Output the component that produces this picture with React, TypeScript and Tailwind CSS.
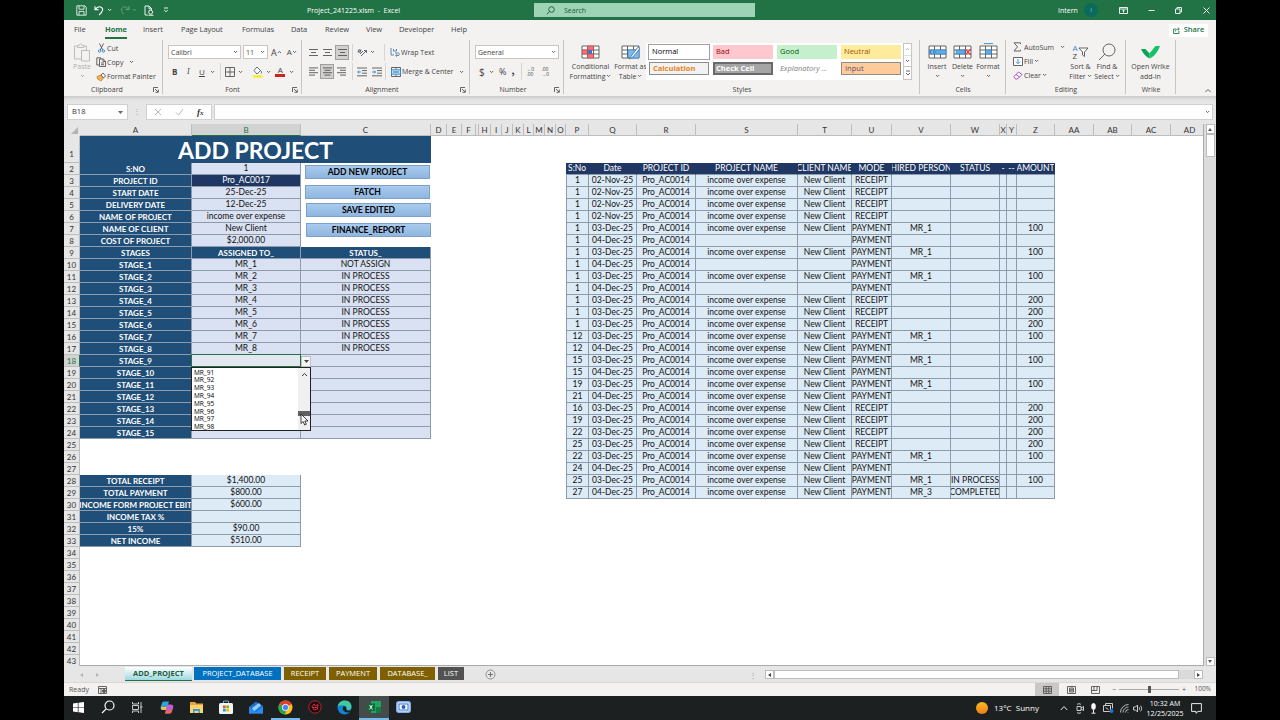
import React from "react"
import clsx from "clsx"

type WithChildren = { children?: React.ReactNode; className?: string }

const SHEET_COLS = "grid grid-cols-[112px_109px_130px_16px_15px_14px_3px_12px_11px_11px_11px_10px_11px_11px_10px_23px_48px_59px_102px_54px_40px_59px_49px_7px_10px_38px_39px_38px_39px_38px]"
const FORM_COLS = "grid grid-cols-[112px_109px_130px]"
const LEDGER_COLS = "grid grid-cols-[23px_48px_59px_102px_54px_40px_59px_49px_7px_10px_38px]"

const columnNames = ["A", "B", "C", "D", "E", "F", "", "H", "I", "J", "K", "L", "M", "N", "O", "P", "Q", "R", "S", "T", "U", "V", "W", "X", "Y", "Z", "AA", "AB", "AC", "AD"]

const projectRows = [
	["S:NO", "1"],
	["PROJECT ID", "Pro_AC0017"],
	["START DATE", "25-Dec-25"],
	["DELIVERY DATE", "12-Dec-25"],
	["NAME OF PROJECT", "income over expense"],
	["NAME OF CLIENT", "New Client"],
	["COST OF PROJECT", "$2,000.00"],
]

const stageRows = Array.from({ length: 15 }, (_, i) => [
	`STAGE_${i + 1}`,
	i < 8 ? `MR_${i + 1}` : "",
	i === 0 ? "NOT ASSIGN" : i < 8 ? "IN PROCESS" : "",
])

const totalRows = [
	["TOTAL RECEIPT", "$1,400.00"],
	["TOTAL PAYMENT", "$800.00"],
	["INCOME FORM PROJECT EBIT", "$600.00"],
	["INCOME TAX %", ""],
	["15%", "$90.00"],
	["NET INCOME", "$510.00"],
]

const ledgerHead = ["S:No", "Date", "PROJECT ID", "PROJECT NAME", "CLIENT NAME", "MODE", "HIRED PERSON", "STATUS", "-", "--", "AMOUNT"]

// serial, date, named project?, mode, person, status, amount
const ledger: [number, string, boolean, string, string, string, string][] = [
	[1, "02-Nov-25", true, "RECEIPT", "", "", ""],
	[1, "02-Nov-25", true, "RECEIPT", "", "", ""],
	[1, "02-Nov-25", true, "RECEIPT", "", "", ""],
	[1, "02-Nov-25", true, "RECEIPT", "", "", ""],
	[1, "03-Dec-25", true, "PAYMENT", "MR_1", "", "100"],
	[1, "04-Dec-25", false, "PAYMENT", "", "", ""],
	[1, "03-Dec-25", true, "PAYMENT", "MR_1", "", "100"],
	[1, "04-Dec-25", false, "PAYMENT", "", "", ""],
	[1, "03-Dec-25", true, "PAYMENT", "MR_1", "", "100"],
	[1, "04-Dec-25", false, "PAYMENT", "", "", ""],
	[1, "03-Dec-25", true, "RECEIPT", "", "", "200"],
	[1, "03-Dec-25", true, "RECEIPT", "", "", "200"],
	[1, "03-Dec-25", true, "RECEIPT", "", "", "200"],
	[12, "03-Dec-25", true, "PAYMENT", "MR_1", "", "100"],
	[12, "04-Dec-25", true, "PAYMENT", "", "", ""],
	[15, "03-Dec-25", true, "PAYMENT", "MR_1", "", "100"],
	[15, "04-Dec-25", true, "PAYMENT", "", "", ""],
	[19, "03-Dec-25", true, "PAYMENT", "MR_1", "", "100"],
	[21, "04-Dec-25", true, "PAYMENT", "", "", ""],
	[16, "03-Dec-25", true, "RECEIPT", "", "", "200"],
	[19, "03-Dec-25", true, "RECEIPT", "", "", "200"],
	[22, "03-Dec-25", true, "RECEIPT", "", "", "200"],
	[25, "03-Dec-25", true, "RECEIPT", "", "", "200"],
	[22, "03-Dec-25", true, "PAYMENT", "MR_1", "", "100"],
	[24, "04-Dec-25", true, "PAYMENT", "", "", ""],
	[25, "03-Dec-25", true, "PAYMENT", "MR_1", "IN PROCESS", "100"],
	[27, "04-Dec-25", true, "PAYMENT", "MR_3", "COMPLETED", ""],
]

function Svg({ w, h, children, className }: WithChildren & { w: number; h: number }) {
	return (
		<svg width={w} height={h} viewBox={`0 0 ${w} ${h}`} fill="none" stroke="#555" strokeWidth="0.9" className={clsx("shrink-0", className)}>
			{children}
		</svg>
	)
}

function Caret({ className }: { className?: string }) {
	return (
		<Svg w={5} h={4} className={className}>
			<path d="M1 1l1.6 1.6L4.2 1" />
		</Svg>
	)
}

function Launcher() {
	return (
		<Svg w={6} h={6}>
			<path d="M.5 5V.5H5M2 2l3 3M5.3 2.5v2.8H2.5" />
		</Svg>
	)
}

function Lines({ rows }: { rows: [number, number][] }) {
	return (
		<Svg w={9} h={9}>
			{rows.map(([from, to], i) => (
				<path key={i} d={`M${from} ${rows.length === 3 ? i * 3 + 1.5 : i * 2.4 + 0.9}H${to}`} />
			))}
		</Svg>
	)
}

function Group({ label, launcher, children, className }: WithChildren & { label: string; launcher?: boolean }) {
	return (
		<div className={clsx("relative flex h-[55px] shrink-0 flex-col", className)}>
			<div className="flex h-[45px]">{children}</div>
			<div className="flex h-3 items-center justify-center text-[7px]">{label}</div>
			{launcher && <div className="absolute right-1 bottom-0.5"><Launcher /></div>}
			<div className="absolute top-0 right-0 h-[54px] w-px bg-[#c8c6c4]" />
		</div>
	)
}

function BigButton({ icon, lines, caret, className }: { icon: React.ReactNode; lines: string[]; caret?: boolean; className?: string }) {
	return (
		<div className={clsx("flex shrink-0 flex-col items-center pt-0.5 text-[7px] whitespace-nowrap", className)}>
			<div className="flex h-[20px] items-center">{icon}</div>
			{lines.map((line, i) => (
				<div key={line} className="flex h-[9.5px] items-center gap-px">
					{line}
					{caret && i === 1 && <Caret />}
				</div>
			))}
			{caret && lines.length === 1 && <Caret className="mt-0.5" />}
		</div>
	)
}

function TitleBar() {
	return (
		<header className="flex h-5 items-center bg-[#217346] text-[7px] text-white">
			<div className="flex w-[243px] items-center pl-3">
				<Svg w={11} h={11} className="stroke-white"><path d="M.8.8h8l1.4 1.4v8H.8zM3 .8v3.4h5V.8M3 10V6.4h5V10" stroke="#e8f2ec" /></Svg>
				<Svg w={11} h={11} className="ml-[7px]"><path d="M1 1.2v3.6h3.6M1.2 4.6C3 2 5 1.4 6.6 2c3.2 1.4 2.600 4.500-1.600 8" stroke="#fff" strokeWidth="1.1" /></Svg>
				<Svg w={5} h={4} className="ml-0.5"><path d="M1 1l1.600 1.600L4.200 1" stroke="#fff" /></Svg>
				<Svg w={10} h={10} className="ml-2 opacity-35"><path d="M9 1v3.500H5.500M8.800 4.400C7 2 5 1.400 3.500 2 .500 3.500 1.200 6 3.500 9" stroke="#fff" /></Svg>
				<Svg w={5} h={4} className="ml-0.5 opacity-35"><path d="M1 1l1.600 1.600L4.200 1" stroke="#fff" /></Svg>
				<Svg w={10} h={11} className="ml-[7px]"><path d="M4 10H1V1h4l2.500 2.500V5M5 1v2.800h2.500" stroke="#fff" /><circle cx="6.600" cy="7.200" r="2" stroke="#fff" /><path d="M4.500 10.300h5" stroke="#fff" /></Svg>
				<Svg w={6} h={6} className="ml-[9px]"><path d="M1 1h4M1.200 3l1.800 1.800L4.800 3" stroke="#fff" /></Svg>
			</div>
			<div className="w-[227px] text-[7px] whitespace-pre">Project_241225.xlsm  -  Excel</div>
			<div className="flex h-[14px] w-[221px] items-center bg-[#9fd3b6] pl-3 text-[#1c5a38]">
				<Svg w={9} h={9}><circle cx="5.500" cy="3.500" r="2.800" stroke="#1c5a38" /><path d="M3.500 5.500L.700 8.300" stroke="#1c5a38" /></Svg>
				<span className="ml-[9px]">Search</span>
			</div>
			<div className="ml-[303px] w-[26px]">Intern</div>
			<div className="flex size-[14px] items-center justify-center rounded-full bg-[#0b6a5c] text-[6px] text-[#8fd0c4]">I</div>
			<Svg w={9} h={7} className="ml-[21px]"><path d="M.500.500h8v6h-8zM.500 2h8M4.500 5.500V3M3.300 4l1.200-1 1.200 1" stroke="#fff" /></Svg>
			<Svg w={7} h={7} className="ml-[20px]"><path d="M.500 3.500h6" stroke="#fff" /></Svg>
			<Svg w={7} h={7} className="ml-5"><path d="M.500 2h4.500v4.500H.500zM2 2V.500h4.500V5H5" stroke="#fff" /></Svg>
			<Svg w={7} h={7} className="ml-[21px]"><path d="M.500.500l6 6M6.500.500l-6 6" stroke="#fff" /></Svg>
		</header>
	)
}

function MenuTabs() {
	return (
		<nav className="flex h-5 items-center bg-[#f3f2f1] text-[7.500px] text-[#444] tracking-[-0.01em]">
			<span className="w-[41px] pl-2.5">File</span>
			<span className="relative w-[38px] font-bold text-[#217346]">
				Home
				<i className="absolute -bottom-[5px] left-0 h-[1.500px] w-[22px] bg-[#217346]" />
			</span>
			<span className="w-[38px]">Insert</span>
			<span className="w-[61px]">Page Layout</span>
			<span className="w-[49px]">Formulas</span>
			<span className="w-[34px]">Data</span>
			<span className="w-[41px]">Review</span>
			<span className="w-[33px]">View</span>
			<span className="w-[52px]">Developer</span>
			<span>Help</span>
			<div className="mr-2 ml-auto flex h-[13px] w-[39px] items-center justify-center gap-1 bg-white font-semibold text-[#217346]">
				<Svg w={7} h={7}><path d="M3 2H.600v4.500h5.300V4M2.300 4.500C2.500 2.500 4 2 6 2M4.700.500L6.300 2 4.700 3.500" stroke="#217346" /></Svg>
				Share
			</div>
		</nav>
	)
}

function Gallery() {
	const box = "flex h-[13.500px] items-center pl-[3px]"
	return (
		<div className="mt-[3px] ml-0.5 flex h-[37px] bg-white">
			<div className="grid grid-cols-4 content-start gap-x-1 gap-y-[3px] pt-0.5 pl-[3px] text-[7.500px]">
				<div className={clsx(box, "w-[60px] text-black outline outline-[#a19f9d]")}>Normal</div>
				<div className={clsx(box, "w-[60px] bg-[#ffc7ce] text-[#9c0006]")}>Bad</div>
				<div className={clsx(box, "w-[60px] bg-[#c6efce] text-[#006100]")}>Good</div>
				<div className={clsx(box, "w-[60px] bg-[#ffeb9c] text-[#9c5700]")}>Neutral</div>
				<div className={clsx(box, "w-[60px] border border-[#8c8c8c] bg-[#f2f2f2] pl-0.5 font-bold text-[#e8821c]")}>Calculation</div>
				<div className={clsx(box, "w-[60px] border-2 border-[#6a6a6a] bg-[#a5a5a5] pl-px font-bold text-white")}>Check Cell</div>
				<div className={clsx(box, "w-[60px] text-[#7f7f7f] italic")}>Explanatory ...</div>
				<div className={clsx(box, "w-[60px] border border-[#8c8c8c] bg-[#ffcc99] pl-0.5 text-[#5a4a76]")}>Input</div>
			</div>
			<div className="ml-0.5 grid w-[9px] grid-rows-3 divide-y divide-[#c8c6c4] border border-[#c8c6c4]">
				<div className="flex items-center justify-center opacity-50"><Caret className="rotate-180" /></div>
				<div className="flex items-center justify-center"><Caret /></div>
				<div className="flex items-center justify-center"><Svg w={6} h={6}><path d="M1 1h4M1 3l2 2 2-2" /></Svg></div>
			</div>
		</div>
	)
}

function TableIcon({ children }: WithChildren) {
	return (
		<Svg w={19} h={18}>
			<path d="M1 3h17v12H1zM1 7h17M1 11h17M6.500 3v12M12.500 3v12" fill="#fff" />
			{children}
		</Svg>
	)
}

function Divider({ className }: { className?: string }) {
	return <i className={clsx("h-[17px] w-px shrink-0 bg-[#d8d6d4]", className)} />
}

function Ribbon() {
	return (
		<div className="flex h-14 bg-[#f3f2f1] text-[7px] text-[#444]">
			<Group label="Clipboard" launcher className="w-[99px] pr-px [&>div:nth-child(2)]:mr-3">
				<div className="flex w-8 flex-col items-center pt-[3px] pl-1 text-[#b0aeac]">
					<Svg w={18} h={19}><path d="M4 3H1.500v13H8M11 3h2.500v4M4.500 4.500V2.500h1.700c0-2 3-2 3 0H11v2zM8.500 7.500h8v10.500h-8z" stroke="#b8b6b4" /></Svg>
					<span className="mt-px">Paste</span>
					<Caret className="mt-1 opacity-50" />
				</div>
				<div className="flex flex-col pt-px">
					<div className="flex h-[14px] items-center">
						<Svg w={11} h={10}><path d="M3.500.500l3.200 6.500M7.500.500L4.300 7" /><circle cx="3.600" cy="8" r="1.200" stroke="#2b88d8" /><circle cx="7.400" cy="8" r="1.200" stroke="#2b88d8" /></Svg>
						Cut
					</div>
					<div className="flex h-[14.500px] items-center">
						<Svg w={11} h={10}><path d="M3.500 8H.800V.800h4V2M3.500 2h3.800l2.200 2.200v5.300h-6zM7 2v2.500h2.500M5 6h3M5 7.700h3" /></Svg>
						Copy<Caret className="ml-1.5" />
					</div>
					<div className="flex h-[14px] items-center">
						<Svg w={11} h={10}><path d="M1 4.500l4-1.500 2.500 3L5 9 1.500 7z" fill="#f0b254" stroke="#d08a2a" /><path d="M5 3l2-2 2.500 3-2 2z" fill="#fff" /></Svg>
						Format Painter
					</div>
				</div>
			</Group>

			<Group label="Font" launcher className="w-[139px]">
				<div className="flex flex-col pl-[5px]">
					<div className="mt-[5px] flex h-[14px] items-center">
						<div className="flex h-[14px] w-[73px] items-center justify-between border border-[#c8c6c4] bg-white px-0.5">Calibri<Caret /></div>
						<div className="ml-0.5 flex h-[14px] w-[25px] items-center justify-between border border-[#c8c6c4] bg-white px-0.5">11<Caret /></div>
						<span className="ml-[3px] text-[9px]">A</span><Caret className="mb-1.500 rotate-180" />
						<span className="ml-[5px] text-[8px]">A</span><Caret className="mb-1.500" />
					</div>
					<div className="mt-1 flex h-[17px] items-center">
						<b className="ml-1 w-[14px] text-[8px]">B</b>
						<i className="w-[13px] pl-px font-serif text-[8px]">I</i>
						<span className="text-[8px] underline">U</span>
						<Caret className="ml-[5px]" />
						<Divider className="ml-[5px]" />
						<Svg w={10} h={10} className="ml-1"><path d="M.500.500h9v9h-9zM5 .500v9M.500 5h9" /></Svg>
						<Caret className="ml-[3px]" />
						<Svg w={11} h={12} className="ml-[9px]"><path d="M2 4.500L5 1l3.500 3.500L5 8zM8.500 4.500c1 1 1.500 2 .500 3" fill="#fff" stroke="#44617c" /><path d="M1 10.500h9.500" stroke="#f5ee2e" strokeWidth="2.500" /></Svg>
						<Caret className="ml-[3px]" />
						<div className="ml-1 flex w-[11px] flex-col items-center text-[8px] leading-[8px]">A<i className="h-[2.500px] w-[10px] bg-[#d02020]" /></div>
						<Caret className="ml-[3px]" />
					</div>
				</div>
			</Group>

			<Group label="Alignment" launcher className="w-[168px] pr-2 [&>div:last-child]:right-0">
				<div className="flex flex-col pl-1">
					<div className="mt-1 flex h-4 items-center">
						<div className="flex w-[14px] justify-center"><Lines rows={[[0, 9], [2, 7], [0, 9]]} /></div>
						<div className="flex w-[15px] justify-center"><Lines rows={[[0, 9], [2, 7], [0, 9]]} /></div>
						<div className="flex h-[15px] w-[14px] items-center justify-center border border-[#a19f9d] bg-[#d2d0ce]"><Lines rows={[[0, 9], [2, 7], [0, 9]]} /></div>
						<Divider className="ml-[3px]" />
						<Svg w={11} h={10} className="ml-1"><path d="M1 5.500l3-3M3 7l3-3M4 9l5.500-5.500M9.500 3.500H7M9.500 3.500V6" stroke="#557" /><circle cx="2.500" cy="4" r="1.300" /></Svg>
						<Caret className="ml-0.5" />
						<Divider className="ml-[9px]" />
						<Svg w={10} h={10} className="mr-px ml-[5px]"><path d="M1 1v7M3.500 2v2h3V2M1 8h3M5 6h3.500c1 0 1 2.500 0 2.500H6M7 7.200L5.700 8.500 7 9.700" stroke="#4a7ba6" /></Svg>
						Wrap Text
					</div>
					<div className="mt-[3px] flex h-[17px] items-center">
						<div className="flex w-[14px] justify-center"><Lines rows={[[0, 9], [0, 6], [0, 9], [0, 6]]} /></div>
						<div className="flex h-[15px] w-[14px] items-center justify-center border border-[#a19f9d] bg-[#d2d0ce]"><Lines rows={[[0, 9], [1.5, 7.5], [0, 9], [1.5, 7.5]]} /></div>
						<div className="flex w-[15px] justify-center"><Lines rows={[[0, 9], [3, 9], [0, 9], [3, 9]]} /></div>
						<Divider className="ml-[3px]" />
						<Svg w={10} h={10} className="ml-1"><path d="M0 1h10M5 3.600h5M5 6.200h5M0 8.800h10" /><path d="M4 5H.700M2 3.500L.700 5 2 6.500" stroke="#2b88d8" /></Svg>
						<Svg w={10} h={10} className="ml-[5px]"><path d="M0 1h10M5 3.600h5M5 6.200h5M0 8.800h10" /><path d="M0 5h3.500M2.200 3.500L3.500 5 2.200 6.500" stroke="#2b88d8" /></Svg>
						<Divider className="ml-[3px]" />
						<Svg w={10} h={10} className="mr-px ml-[5px]"><path d="M.500.500h9v9h-9zM5 .500v2M5 7.500v2" /><path d="M.500 2.800h9v4.400h-9z" fill="#bfe0f7" stroke="#2b88d8" /><path d="M2 5h6" stroke="#2b6ca8" /></Svg>
						<span className="whitespace-nowrap">Merge &amp; Center</span>
						<Caret className="ml-1.5" />
					</div>
				</div>
			</Group>

			<Group label="Number" launcher className="w-[94px] pr-2 [&>div:last-child]:right-0">
				<div className="flex flex-col pl-[5px]">
					<div className="mt-[5px] flex h-[14px] w-[84px] shrink-0 items-center justify-between border border-[#c8c6c4] bg-white px-0.5">General<Caret /></div>
					<div className="mt-1 flex h-[17px] items-center text-[10px]">
						<span className="w-[14px] pl-1">$</span>
						<Caret />
						<span className="ml-[5px] text-[9px]">%</span>
						<b className="ml-[5px] w-2.5 pb-1 font-serif text-[14px]">,</b>
						<Divider />
						<div className="ml-1 flex w-[11px] flex-col text-[5px] leading-[5px] tracking-tight"><span className="text-[#2b88d8]">←<span className="text-[#444]">0</span></span><span>.00</span></div>
						<div className="ml-1 flex w-[11px] flex-col text-[5px] leading-[5px] tracking-tight"><span>.00</span><span className="text-[#2b88d8]">→<span className="text-[#444]">0</span></span></div>
					</div>
				</div>
			</Group>

			<Group label="Styles" className="w-[356px]">
				<BigButton className="w-[53px]" caret lines={["Conditional", "Formatting"]} icon={<TableIcon><path d="M6.500 3h6v4h-6zM6.500 11h6v4h-6zM1.500 7h5v4h-5z" fill="#f2707a" stroke="#c44" strokeWidth=".6" /><path d="M7 7h4v4H7z" fill="#4472c4" stroke="none" /></TableIcon>} />
				<BigButton className="w-[27px]" caret lines={["Format as", "Table"]} icon={<TableIcon><path d="M7 7h11v8H7z" fill="#7cbcee" stroke="#2b7cc4" strokeWidth=".6" /><path d="M17.500 3.500L11 12l-3 4 4-2 6.500-8z" fill="#fff" stroke="#2b6ca8" strokeWidth=".8" /></TableIcon>} />
				<Gallery />
			</Group>

			<Group label="Cells" className="w-[86px]">
				<BigButton className="ml-[4px] w-[26px]" caret lines={["Insert"]} icon={<TableIcon><path d="M5 7h13v4H5z" fill="#5aaeea" stroke="#2b7cc4" strokeWidth=".6" /><path d="M8 9H1.500M4 6.500L1.500 9 4 11.500" stroke="#2b88d8" strokeWidth="1.200" /></TableIcon>} />
				<BigButton className="w-[25px]" caret lines={["Delete"]} icon={<TableIcon><path d="M3 7h9v4H3z" fill="#5aaeea" stroke="#2b7cc4" strokeWidth=".6" /><path d="M12 6l6 6M18 6l-6 6" stroke="#e0404a" strokeWidth="1.100" /></TableIcon>} />
				<BigButton className="w-[26px]" caret lines={["Format"]} icon={<TableIcon><path d="M6.500 7h6v4h-6z" fill="#5aaeea" stroke="#2b7cc4" strokeWidth=".6" /><path d="M5 .600h9" stroke="#2b88d8" /></TableIcon>} />
			</Group>

			<Group label="Editing" className="w-[120px]">
				<div className="flex w-[61px] flex-col pl-[7px]">
					<div className="flex h-[14px] items-center whitespace-nowrap"><Svg w={9} h={10} className="mr-0.5"><path d="M7.500 2V.800H1l3.500 4L1 9h6.500V7.800" /></Svg>AutoSum<Caret className="ml-1.5" /></div>
					<div className="flex h-[14px] items-center"><Svg w={10} h={9} className="mr-px"><path d="M.500.500h9v8h-9z" fill="#fff" /><path d="M5 2v4.500M3 4.700l2 2 2-2" stroke="#2b88d8" /></Svg>Fill<Caret className="ml-px" /></div>
					<div className="flex h-[14px] items-center"><Svg w={10} h={9} className="mr-px"><path d="M1 5.500L5.500 1 9 3.500 4.500 8H2.500z" fill="#fff" stroke="#a03ab8" /><path d="M3 3.500L6.500 6" stroke="#a03ab8" /></Svg>Clear<Caret className="ml-px" /></div>
				</div>
				<BigButton className="w-[27px]" caret lines={["Sort &", "Filter"]} icon={
					<div className="flex items-center">
						<div className="flex flex-col text-[8px] leading-[8px]"><span className="text-[#2b88d8]">A</span><span>Z</span></div>
						<Svg w={11} h={12}><path d="M1 2h9L6.500 6v4.500L4.500 9V6z" fill="#fff" /></Svg>
					</div>
				} />
				<BigButton className="w-[26px]" caret lines={["Find &", "Select"]} icon={<Svg w={18} h={18}><circle cx="11" cy="7" r="6" /><path d="M6.800 11.200L1 17" /></Svg>} />
			</Group>

			<Group label="Wrike" className="w-[50px]">
				<BigButton className="w-[49px]" lines={["Open Wrike", "add-in"]} icon={
					<Svg w={19} h={13}>
						<path d="M0 3h4.500l4 4.500v5C5 11 2.500 8 0 3z" fill="#0aa34f" stroke="none" />
						<path d="M19 0h-4.500L8.500 7.500v5C13.500 10.500 16.500 6 19 0z" fill="#12c466" stroke="none" />
					</Svg>
				} />
			</Group>
			<Svg w={8} h={6} className="mt-auto mr-1 mb-0.5 ml-auto"><path d="M1.500 4L4 1.500 6.500 4" /></Svg>
		</div>
	)
}

function FormulaBar() {
	return (
		<div className="flex h-[28px] bg-[#e6e6e6] pt-2 text-[7.500px] text-[#333] shadow-[inset_0_4px_4px_-3px_#bbb]">
			<div className="ml-[3px] flex h-4 w-[61px] items-center justify-between border border-[#d0d0d0] bg-white px-1">
				B18
				<svg width="5" height="3" className="fill-[#666]"><path d="M0 0h5L2.500 3z" /></svg>
			</div>
			<div className="flex w-[18px] items-center justify-center pb-1 text-[#aaa]">⋮</div>
			<div className="flex h-4 w-[66px] items-center border border-[#d0d0d0] bg-white pl-[7px]">
				<Svg w={8} h={8}><path d="M1 1l6 6M7 1L1 7" stroke="#b0b0b0" /></Svg>
				<Svg w={9} h={8} className="ml-[13px]"><path d="M1 4.500L3.500 7 8 1" stroke="#b0b0b0" /></Svg>
				<i className="ml-[13px] font-['Liberation_Serif',serif] text-[9px] font-bold">f<span className="text-[7px]">x</span></i>
			</div>
			<div className="ml-0.5 flex h-4 flex-1 items-center justify-end border border-[#d0d0d0] bg-white pr-0.5 mr-[3px]"><Caret /></div>
		</div>
	)
}

function Cell({ children, className }: WithChildren) {
	return <div className={clsx("flex h-3 items-center justify-center overflow-hidden border-r border-b border-[#8d9cad] whitespace-nowrap", className)}>{children}</div>
}

function NameCell({ children }: WithChildren) {
	return <Cell className="border-[#7e97ad] bg-[#1f4e78] text-[8px] font-bold text-white">{children}</Cell>
}

function MacroButton({ children, className }: WithChildren) {
	return (
		<div className={clsx("flex h-[14px] w-[125px] items-center justify-center border border-[#7f9fc4] bg-linear-to-b from-[#a9cbee] to-[#8fb6e0] text-[8.500px] font-bold text-black", className)}>
			{children}
		</div>
	)
}

function AssigneeDropdown() {
	return (
		<div className="absolute top-[231px] left-[111px] flex h-[64px] w-[120px] border border-[#222] bg-white text-black">
			<div className="flex flex-1 flex-col overflow-hidden pt-px pl-0.5 font-['Open_Sans',sans-serif] text-[6.500px]">
				{[91, 92, 93, 94, 95, 96, 97, 98].map((n) => (
					<div key={n} className="flex h-[7.800px] shrink-0 items-center">MR_{n}</div>
				))}
			</div>
			<div className="flex w-[12px] flex-col items-center bg-[#f0f0f0] pt-1">
				<Svg w={7} h={5}><path d="M1 4l2.500-2.500L6 4" stroke="#222" /></Svg>
				<i className="mt-[34px] h-[5px] w-full bg-[#606060]" />
			</div>
		</div>
	)
}

function ProjectForm() {
	return (
		<div className="relative w-[351px]">
			<div className="flex h-[27px] items-center justify-center bg-[#1f4e78] pt-0.5 text-[23px] font-bold text-white">ADD PROJECT</div>
			<div className="flex">
				<div>
					{projectRows.map(([name, value], i) => (
						<div key={name} className="grid grid-cols-[112px_109px]">
							<NameCell>{name}</NameCell>
							<Cell className={i === 1 ? "bg-[#203764] text-white" : "bg-[#d9e1f2]"}>{value}</Cell>
						</div>
					))}
				</div>
				<div className="flex h-[84px] flex-col pt-0.5 pl-1">
					<MacroButton>ADD NEW PROJECT</MacroButton>
					<MacroButton className="mt-1.5">FATCH</MacroButton>
					<MacroButton className="mt-1 ml-px">SAVE EDITED</MacroButton>
					<MacroButton className="mt-[6px] ml-px">FINANCE_REPORT</MacroButton>
				</div>
			</div>
			<div className={FORM_COLS}>
				<NameCell>STAGES</NameCell>
				<NameCell>ASSIGNED TO_</NameCell>
				<NameCell>STATUS_</NameCell>
			</div>
			{stageRows.map(([stage, person, status]) => (
				<div key={stage} className={FORM_COLS}>
					<NameCell>{stage}</NameCell>
					<Cell className="bg-[#d9e1f2]">{person}</Cell>
					<Cell className="bg-[#d9e1f2]">{status}</Cell>
				</div>
			))}
			<div className="mt-9 w-[221px]">
				{totalRows.map(([name, value]) => (
					<div key={name} className="grid grid-cols-[112px_109px]">
						<NameCell>{name}</NameCell>
						<Cell className="bg-[#ddebf7]">{value}</Cell>
					</div>
				))}
			</div>

			{/* active cell with its list button */}
			<div className="absolute top-[218px] left-[111px] h-[13px] w-[110px] border border-[#217346] bg-[#e3e7f0]" />
			<div className="absolute top-[220px] left-[221px] flex h-[11px] w-2.5 items-center justify-center border border-[#c0c0c0] bg-[#f4f4f4]">
				<svg width="5" height="3" className="fill-[#444]"><path d="M0 0h5L2.500 3z" /></svg>
			</div>
			<AssigneeDropdown />
			<svg width="9" height="13" viewBox="0 0 9 13" className="absolute top-[277px] left-[220px]" fill="#fff" stroke="#111" strokeWidth=".8">
				<path d="M1 1v9.500l2.200-2 1.500 3.500 1.600-.700-1.500-3.300H8z" />
			</svg>
		</div>
	)
}

function Ledger() {
	return (
		<div className="mt-[27px] ml-[135px] w-[489px] self-start border-l border-[#8d9cad]">
			<div className={clsx(LEDGER_COLS, "-ml-px")}>
				{ledgerHead.map((name, i) => (
					<Cell key={i} className="border-r-[#203764] bg-[#203764] text-white">{name}</Cell>
				))}
			</div>
			{ledger.map(([serial, date, named, mode, person, status, amount], i) => (
				<div key={i} className={clsx(LEDGER_COLS, "-ml-px")}>
					{[serial, date, "Pro_AC0014", named ? "income over expense" : "", named ? "New Client" : "", mode, person, status, "", "", amount].map((value, j) => (
						<Cell key={j} className={clsx("bg-[#ddebf7]", j === 0 && "border-l")}>{value}</Cell>
					))}
				</div>
			))}
		</div>
	)
}

function Sheet() {
	return (
		<div className="flex h-[542px] bg-[#e6e6e6]">
			<div className="flex w-4 shrink-0 flex-col overflow-hidden text-[8px] text-[#333]">
				<div className="flex h-3 shrink-0 items-end justify-end pr-0.5 pb-0.5"><svg width="7" height="7" className="fill-[#b4b4b4]"><path d="M7 0v7H0z" /></svg></div>
				<div className="flex h-[27px] shrink-0 items-end justify-center border-r border-b border-[#bdbdbd] pb-1">1</div>
				{Array.from({ length: 42 }, (_, i) => i + 2).map((n) => (
					<div key={n} className={clsx("flex h-3 shrink-0 items-center justify-center border-r border-b", n === 18 ? "border-r-[#217346] border-b-[#bdbdbd] bg-[#d2d2d2] text-[#217346]" : "border-[#bdbdbd]")}>{n}</div>
				))}
			</div>
			<div className="w-[1124px] shrink-0 overflow-hidden border-r border-b border-[#ababab]">
				<div className={clsx(SHEET_COLS, "w-[1132px] text-[8px] text-[#333]")}>
					{columnNames.map((name, i) => (
						<div key={i} className={clsx("flex h-3 items-center justify-center border-r border-b", name === "B" ? "border-r-[#bdbdbd] border-b-[#217346] bg-[#d2d2d2] text-[#217346]" : "border-[#bdbdbd]")}>{name}</div>
					))}
				</div>
				<div className="flex h-[530px] bg-white text-[8.500px] text-[#111]">
					<ProjectForm />
					<Ledger />
				</div>
			</div>
			<div className="flex flex-1 flex-col items-center bg-[#dcdcdc]">
				<div className="flex h-2.5 w-[9px] items-center justify-center border border-[#bbb] bg-white"><svg width="4" height="3" className="fill-[#555]"><path d="M2 0l2 3H0z" /></svg></div>
				<div className="h-[23px] w-[9px] border border-[#bbb] bg-white" />
				<div className="mt-auto flex h-[9px] w-[9px] items-center justify-center border border-[#bbb] bg-white"><svg width="4" height="3" className="fill-[#555]"><path d="M0 0h4L2 3z" /></svg></div>
			</div>
		</div>
	)
}

function SheetTabs() {
	const tab = "mr-[3px] flex h-[13px] items-center justify-center text-[7.500px] text-white"
	return (
		<div className="flex h-4 items-start bg-[#e6e6e6] pt-px">
			<div className="flex w-[61px] items-center gap-[13px] pt-1.5 pl-4">
				<svg width="3" height="4" className="fill-[#b4b4b4]"><path d="M3 0v4L0 2z" /></svg>
				<svg width="3" height="4" className="fill-[#b4b4b4]"><path d="M0 0v4l3-2z" /></svg>
			</div>
			<div className="mr-0.5 flex h-[14px] w-[67px] items-center justify-center border-b border-[#217346] bg-linear-to-b from-white to-[#9fd8e0] text-[7.500px] font-bold text-[#1d5f3c]">ADD_PROJECT</div>
			<div className={clsx(tab, "w-[87px] bg-[#0070c0]")}>PROJECT_DATABASE</div>
			<div className={clsx(tab, "w-[42px] bg-[#7f6000]")}>RECEIPT</div>
			<div className={clsx(tab, "w-[48px] bg-[#7f6000]")}>PAYMENT</div>
			<div className={clsx(tab, "w-[55px] bg-[#7f6000]")}>DATABASE_</div>
			<div className={clsx(tab, "w-[26px] bg-[#525252]")}>LIST</div>
			<Svg w={11} h={11} className="mt-[2px] ml-[18px]"><circle cx="5.500" cy="5.500" r="4.500" stroke="#888" /><path d="M5.500 3v5M3 5.500h5" stroke="#666" /></Svg>
			<div className="mt-[3px] ml-auto flex h-[9px] items-center">
				<span className="mr-2 text-[8px] text-[#999]">⋮</span>
				<div className="flex size-[9px] items-center justify-center border border-[#bbb] bg-white"><svg width="3" height="4" className="fill-[#444]"><path d="M3 0v4L0 2z" /></svg></div>
				<div className="h-[9px] w-[405px] border border-[#bbb] bg-white" />
				<div className="h-[9px] w-[15px] bg-[#dadada]" />
				<div className="mr-[13px] flex size-[9px] items-center justify-center border border-[#bbb] bg-white"><svg width="3" height="4" className="fill-[#444]"><path d="M0 0v4l3-2z" /></svg></div>
			</div>
		</div>
	)
}

function StatusBar() {
	return (
		<div className="flex h-[14px] items-center border-t border-[#d8d8d8] bg-[#f3f2f1] text-[7px] text-[#555]">
			<span className="w-[34px] pl-[5px]">Ready</span>
			<Svg w={9} h={8}><path d="M.500.500h8v7h-8zM.500 2.500h8M3 2.500v5" /><circle cx="6" cy="5" r="1.500" fill="#555" /></Svg>
			<div className="ml-auto flex h-[13px] w-6 items-center justify-center bg-[#c9c8c6]"><Svg w={9} h={8}><path d="M.500.500h8v7h-8zM.500 2.800h8M.500 5.200h8M3.200.500v7M5.800.500v7" /></Svg></div>
			<Svg w={9} h={8} className="ml-2"><path d="M.500.500h8v7h-8zM2.500 2h4v4h-4zM3 3.300h3M3 4.700h3" /></Svg>
			<Svg w={9} h={8} className="ml-[15px]"><path d="M.500.500h8v7h-8zM3 .500v4h3v-4M.500 4.500H3" /></Svg>
			<span className="ml-2.5 w-[9px] text-center">−</span>
			<div className="flex h-2 w-[60px] items-center justify-center bg-[linear-gradient(#aaa,#aaa)] bg-[length:100%_1px] bg-center bg-no-repeat"><i className="h-[7px] w-[3px] bg-[#555]" /></div>
			<span className="w-[10px] text-center">+</span>
			<span className="mr-[5px] ml-1 w-[18px] text-right text-[6.500px]">100%</span>
		</div>
	)
}

function TaskIcon({ children, className }: WithChildren) {
	return <div className={clsx("flex h-6 w-[29.500px] shrink-0 items-center justify-center border-b-2", className ?? "border-transparent")}>{children}</div>
}

function Taskbar() {
	return (
		<footer className="flex h-6 items-center bg-[#1c2020] text-white">
			<TaskIcon><Svg w={11} h={11}><path d="M0 1.500l4.800-.700v4.400H0zM5.500.700L11 0v5.200H5.500zM0 5.800h4.800v4.400L0 9.500zM5.500 5.800H11V11l-5.500-.700z" fill="#fff" stroke="none" /></Svg></TaskIcon>
			<TaskIcon><Svg w={14} h={14}><circle cx="8.500" cy="5.500" r="4.500" stroke="#fff" strokeWidth="1.200" /><path d="M5.200 8.800L1 13" stroke="#fff" strokeWidth="1.200" /></Svg></TaskIcon>
			<TaskIcon><Svg w={11} h={11}><path d="M.500 0v2h6V0M.500 3.500h6v4h-6zM.500 11V9h6v2M9 0v11M8 5h2.500" stroke="#ddd" /></Svg></TaskIcon>
			<TaskIcon>
				<Svg w={14} h={13}>
					<path d="M4 .500h5L6.500 9H3C0 9 .500 6 1.500 3.500 2 1.500 2.500.500 4 .500z" fill="#2aa5dc" stroke="none" />
					<path d="M1 6h6l-1 3H3C1 9 .500 7.500 1 6z" fill="#f0c03c" stroke="none" />
					<path d="M7.500 3.500H11c3 0 2.500 3 1.500 5.500-.800 2.500-1.200 3.500-3 3.500H5z" fill="#c65bd0" stroke="none" />
					<path d="M6 9.500h6c-.700 2-1.200 3-2.500 3H5z" fill="#f26a4b" stroke="none" />
				</Svg>
			</TaskIcon>
			<TaskIcon><Svg w={13} h={11}><path d="M0 0h5l1.500 1.500H13V11H0z" fill="#e8a33d" stroke="none" /><path d="M0 3h13v8H0z" fill="#fbd667" stroke="none" /><path d="M3 7h7v4H8.500V9h-4v2H3z" fill="#3f97dd" stroke="none" /></Svg></TaskIcon>
			<TaskIcon><Svg w={14} h={14}><path d="M4.500 3V1h5v2" stroke="#6cc3ee" /><rect y="3" width="14" height="11" rx="1.500" fill="#f3f3f3" stroke="none" /><path d="M4 5.500h2.700v2.700H4z" fill="#f25022" stroke="none" /><path d="M7.300 5.500H10v2.700H7.300z" fill="#7fba00" stroke="none" /><path d="M4 8.800h2.700v2.700H4z" fill="#00a4ef" stroke="none" /><path d="M7.300 8.800H10v2.700H7.300z" fill="#ffb900" stroke="none" /></Svg></TaskIcon>
			<TaskIcon><Svg w={14} h={13}><path d="M0 6l7-5.500L14 5v7.500H0z" fill="#1d6fd0" stroke="none" /><path d="M3 7l7-5 2 2.500-7 6z" fill="#8fd0fa" stroke="none" /><path d="M0 6l7 5 7-5.500v7H0z" fill="#2b8cf0" stroke="none" /></Svg></TaskIcon>
			<TaskIcon className="border-[#76b9ed]">
				<Svg w={15} h={15}>
					<circle cx="7.500" cy="7.500" r="7" fill="#fbc116" stroke="none" />
					<path d="M7.500 7.500L1.400 4A7 7 0 0 1 13.600 4z" fill="#e33b2e" stroke="none" />
					<path d="M7.500 7.500L1.400 4a7 7 0 0 0 5.300 10.500L9 10z" fill="#2aa14b" stroke="none" />
					<circle cx="7.500" cy="7.500" r="3.200" fill="#4285f4" stroke="#fff" />
				</Svg>
			</TaskIcon>
			<TaskIcon><Svg w={14} h={14}><circle cx="7" cy="7" r="6.200" fill="#200a0c" stroke="#c8283a" /><path d="M4 6.500L6 4l1.500 2L10 4.500 9.500 9 6 10zM5 7.500h4" stroke="#e03848" /></Svg></TaskIcon>
			<TaskIcon>
				<Svg w={15} h={15}>
					<circle cx="7.500" cy="7.500" r="7" fill="#1583d2" stroke="none" />
					<path d="M.800 6C2 2 5 .500 8 .500c4 0 6.500 3 6.500 6 0 2.500-2 4-4.500 3.500C11 7 8 3.500.800 6z" fill="#43c9a0" stroke="none" />
					<path d="M6 7c-1 3 1.500 6 6.500 5.300 1-.500 1.500-1.300 1.700-2C11 11.500 8.500 10 9 7.500 8.500 6 6.500 6 6 7z" fill="#1c2020" stroke="none" />
				</Svg>
			</TaskIcon>
			<TaskIcon className="border-[#76b9ed] bg-[#454a4b]">
				<Svg w={14} h={12}><path d="M4 0h10v12H4z" fill="#21a366" stroke="none" /><path d="M9 6h5v6H9z" fill="#107c41" stroke="none" /><path d="M0 2.500h8v7.500H0z" fill="#0f6b39" stroke="none" /><path d="M2.500 4l3 4.500M5.500 4l-3 4.500" stroke="#fff" /></Svg>
			</TaskIcon>
			<TaskIcon>
				<Svg w={15} h={12}><rect x=".8" y=".8" width="13.400" height="10.400" rx="2" fill="#e8f2ff" stroke="#7fb3ea" strokeWidth="1.500" /><rect x="3" y="3" width="9" height="6" fill="#fff" stroke="#2a5fc0" /><circle cx="7.500" cy="6" r="2" fill="#2a5fc0" stroke="none" /></Svg>
			</TaskIcon>
			<div className="ml-auto flex items-center text-[8px]">
				<i className="mr-1.5 size-3 rounded-full bg-linear-to-b from-[#fbb829] to-[#f07c14]" />
				<span className="w-[66px] whitespace-pre">13°C  Sunny</span>
				<Svg w={8} h={6}><path d="M.800 5L4 1.500 7.200 5" stroke="#fff" /></Svg>
				<Svg w={8} h={11} className="ml-2"><path d="M1 3.500h4v4H1zM5 5l2.500-1.500v4L5 6M1 1.500C2 .500 4 .500 5 1.500M1 9.500c1 1 3 1 4 0" stroke="#ddd" /></Svg>
				<Svg w={7} h={11} className="ml-1.5"><rect x="1.800" y=".5" width="3.400" height="6" rx="1.700" fill="#fff" stroke="#fff" /><path d="M3.500 7v3M1.500 10.200h4" stroke="#fff" /></Svg>
				<Svg w={11} h={10} className="ml-1.5"><path d="M.500 2.500h7v6h-7zM2.500 2.500v-2h7v5M2.500 4.500l3 2" stroke="#ddd" /><circle cx="8.500" cy="8" r="2" fill="#1e74d0" stroke="none" /></Svg>
				<Svg w={9} h={9} className="ml-1.5"><path d="M.500 8.500a8 8 0 0 1 8-8M3 8.500A5.500 5.500 0 0 1 8.500 3M5.500 8.500a3 3 0 0 1 3-3M8 8.500V8" stroke="#ccc" /></Svg>
				<Svg w={10} h={9} className="ml-1"><path d="M.500 3h2L4.500 1v7l-2-2h-2zM6 3c.700 1 .700 2 0 3M7.500 1.700c1.500 2 1.500 3.600 0 5.600" stroke="#ddd" /></Svg>
				<div className="ml-1 flex w-[36px] flex-col items-center gap-[3px] text-[7px] whitespace-nowrap"><span>10:32 AM</span><span>12/25/2025</span></div>
				<Svg w={11} h={11} className="mr-[14px] ml-2"><path d="M.600.600h9.800v7.800H7L5 10.300V8.400H.600z" stroke="#fff" /></Svg>
			</div>
		</footer>
	)
}

export default function App() {
	return (
		<div className="flex h-[720px] w-[1280px] justify-center overflow-hidden bg-black">
			<div className="flex w-[1152px] flex-col font-['Open_Sans','Noto_Sans',sans-serif] leading-none">
				<TitleBar />
				<MenuTabs />
				<Ribbon />
				<FormulaBar />
				<div className="font-['Lato','Open_Sans',sans-serif]">
					<Sheet />
				</div>
				<SheetTabs />
				<StatusBar />
				<Taskbar />
			</div>
		</div>
	)
}
